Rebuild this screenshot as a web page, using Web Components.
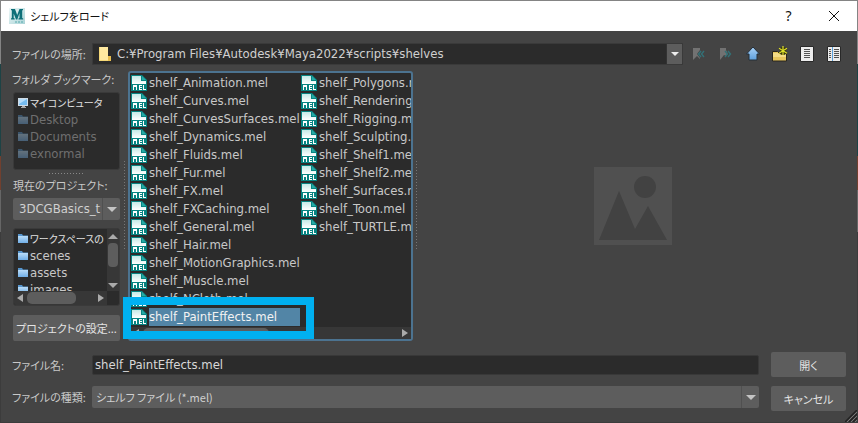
<!DOCTYPE html>
<html lang="ja">
<head>
<meta charset="utf-8">
<title>シェルフをロード</title>
<style>
  html, body { margin: 0; height: 100%; }
  body {
    font: 13px/18px "DejaVu Sans Condensed", "Noto Sans CJK JP", sans-serif;
    font-feature-settings: "palt";
    color: #c8c8c8;
    overflow: hidden;
    background: linear-gradient(#848484 0 64px, #1d4345 64px 156px, #71402f 156px 190px, #666 190px 232px, #3c3c3c 232px);
    --jp: "Noto Sans CJK JP", sans-serif;
    --panel: #444;
    --field: #2b2b2b;
    --raised: #5d5d5d;
  }
</style>
</head>
<body>
<load-dialog></load-dialog>
<script>
const define = (name, html, setup) => {
  const template = document.createElement('template');
  template.innerHTML = html;
  customElements.define(name, class extends HTMLElement {
    constructor() {
      super();
      this.attachShadow({ mode: 'open' }).append(template.content.cloneNode(true));
    }
    connectedCallback() { if (setup) setup(this, this.shadowRoot); }
  });
};

const icons = {
  maya: `<svg viewBox="0 0 16 16"><defs><linearGradient id="g" x2="1" y2="1"><stop stop-color="#eef8f8"/><stop offset="1" stop-color="#a9d3d6"/></linearGradient></defs><path fill="url(#g)" d="M0 0h16v16H0z"/><path fill="#0e6f78" d="M2 1h4l2.200 6L10.500 1H14v1l-.8.500V10l1 .5v1H9.500v-1l1-.5V5L8.300 11.500H7L4.700 5.500V10l1 .5v1H2v-1l.8-.5V2.500L2 2z"/><path stroke="#56a9ad" stroke-dasharray="2 1" d="M6 14h8"/></svg>`,
  mel: `<svg viewBox="0 0 16 16"><defs><linearGradient id="g" x2="0" y2="1"><stop stop-color="#c4e9e6"/><stop offset="1" stop-color="#fff"/></linearGradient></defs><path fill="#078482" d="M0 0h11l5 5v11H0z"/><path fill="url(#g)" d="M1 1h9v5h5v3H1z"/><path fill="#25aaa5" d="M11 1l4 4h-4z"/><path fill="#fff" d="M2 10h4v5H5v-3H3v3H2zM8 10h3v1H9v1h2v1H9v1h2v1H8zM12 10h1v4h2v1h-3z"/></svg>`,
  folder: `<svg viewBox="0 0 12 12"><defs><linearGradient id="g" x2="0" y2="1"><stop stop-color="#b9dcf8"/><stop offset="1" stop-color="#70aee6"/></linearGradient></defs><path fill="#5795cc" d="M1 1h4l1 1.500h5V10H1z"/><path fill="url(#g)" d="M1 3h10v7H1z"/></svg>`,
  computer: `<svg viewBox="0 0 12 12"><path fill="#cfdbe6" d="M1 1h10v8H1z"/><path fill="#75bbef" d="M2 2h8v6H2z"/><path fill="#b6dcf8" d="M2 2h8L2 7z"/><path fill="#aaa" d="M5 9h3v1h1v1H4v-1h1z"/></svg>`,
  location: `<svg viewBox="0 0 14 16"><path fill="#f5d878" d="M1 1h9v9h3v5H1z"/><path fill="#ffe9a0" d="M2 1h8v13H2z"/><path fill="#e7bd50" d="M10 10h3v5h-3z"/></svg>`,
  back: `<svg viewBox="0 0 16 16"><path fill="#727272" d="M2 2h7v2L6 8l3 4v1L6 10l-4 4z"/><path fill="none" stroke="#337177" stroke-width="1.400" d="M10 5L7.500 8l2.500 3M13 5l-2.500 3 2.500 3"/></svg>`,
  forward: `<svg viewBox="0 0 16 16"><path fill="#727272" d="M2 2h6v2l2 4-2 2-2-1-4 5z"/><path fill="none" stroke="#337177" stroke-width="1.400" d="M7 5l2.500 3L7 11M10 5l2.500 3L10 11"/></svg>`,
  up: `<svg viewBox="0 0 16 16"><defs><linearGradient id="g" x2="0" y2="1"><stop stop-color="#a9d2f7"/><stop offset="1" stop-color="#5d9fdc"/></linearGradient></defs><path fill="url(#g)" stroke="#252e37" d="M8 1l6.500 7H12v6H4V8H1.500z"/></svg>`,
  create: `<svg viewBox="0 0 16 16"><path fill="#e8c65c" stroke="#28251c" d="M.5 5.500h5L7 7h7.500v8H.5z"/><path fill="#f4dc86" d="M1 7h5l1 1h7v3H1z"/><path stroke="#39370d" stroke-width="3" d="M11 1v8M8 2.500l6 5M14 2.500l-6 5"/><path stroke="#dfe02a" stroke-width="1.200" d="M11 0v9M7 2.300l8 5M15 2.300l-8 5"/></svg>`,
  list: `<svg viewBox="0 0 14 16"><path fill="#ececec" stroke="#292929" d="M.5.5h13v15H.5z"/><path stroke="#525252" d="M4 3.500h6M4 5.500h6M4 7.500h6M4 9.500h6M4 11.500h6"/></svg>`,
  detail: `<svg viewBox="0 0 14 16"><path fill="#ececec" stroke="#292929" d="M.5.5h13v15H.5z"/><path stroke="#5ba0db" d="M5.500 1v14"/><path stroke="#525252" d="M2 3.500h2M2 5.500h2M2 7.500h2M2 9.500h2M2 11.500h2M7 3.500h5M7 5.500h5M7 7.500h5M7 9.500h5M7 11.500h5"/></svg>`,
  close: `<svg viewBox="0 0 12 12"><path stroke="#111" d="M1 1l10 10M11 1L1 11"/></svg>`,
  picture: `<svg viewBox="0 0 78 78"><path fill="#505050" d="M0 0h78v78H0z"/><circle cx="51" cy="20" r="11" fill="#424242"/><path fill="#424242" d="M5 73l20-49 16 38 13-23 19 34z"/></svg>`,
  grip: `<svg viewBox="0 0 12 12"><path stroke="#222" stroke-width="1.500" d="M0 12L12 0M4 12l8-8M8 12l4-4"/><path stroke="#777" d="M2 12L12 2M6 12l6-6M10 12l2-2"/></svg>`
};

define('ui-icon', `<style>
  :host { display: block; flex: none; width: 16px; height: 16px; }
  svg { display: block; width: 100%; height: 100%; }
</style>`, (el, root) => {
  root.querySelector('svg')?.remove();
  root.append(document.createRange().createContextualFragment(icons[el.getAttribute('name')]));
});

define('title-bar', `<style>
  :host { display: flex; align-items: center; height: 30px; padding: 0 16px 0 8px; background: #fff; color: #111; }
  h1 { flex: 1; margin: 0 0 0 5px; font-family: var(--jp); font-size: 11px; font-weight: 400; }
  button { display: grid; place-items: center; width: 45px; height: 30px; border: 0; padding: 0; background: none; color: inherit; font: 14px/18px "Noto Sans", sans-serif; }
  .close { width: 14px; margin-left: 16px; }
  .close ui-icon { width: 12px; height: 12px; }
</style>
<ui-icon name="maya"></ui-icon><h1><slot></slot></h1>
<button type="button">?</button><button type="button" class="close" aria-label="閉じる"><ui-icon name="close"></ui-icon></button>`);

define('push-button', `<style>
  :host { display: block; }
  button { display: block; width: 100%; height: 100%; border: 0; border-radius: 2px; padding: 0; background: var(--raised); color: #e4e4e4; font-family: var(--jp); font-size: 11px; font-feature-settings: "palt"; white-space: nowrap; }
</style>
<button type="button"><slot></slot></button>`);

define('tool-button', `<style>
  :host { display: block; }
  button { display: grid; place-items: center; width: 24px; height: 22px; border: 0; padding: 0; background: none; }
</style>
<button type="button"><slot></slot></button>`, (el, root) => {
  root.querySelector('button').setAttribute('aria-label', el.getAttribute('label'));
});

define('combo-field', `<style>
  :host { display: grid; grid-template-columns: 80px minmax(0, 1fr); align-items: center; }
  :host([stacked]) { grid-template-columns: minmax(0, 1fr); row-gap: 5px; }
  label { font-family: var(--jp); font-size: 11px; white-space: nowrap; }
  :host([stacked]) label { line-height: 16px; }
  .box { display: grid; grid-template-columns: minmax(0, 1fr) 18px; height: 22px; border-radius: 2px; background: var(--raised); }
  select { grid-area: 1 / 1 / 2 / 3; appearance: none; min-width: 0; width: 100%; height: 22px; margin: 0; border: 0; border-radius: 2px; padding: 0 18px 0 4px; background: none; color: #d0d0d0; font: inherit; font-feature-settings: "palt"; }
  :host([jp]) select { font-family: var(--jp); font-size: 11px; }
  :host([stacked]) select { padding-left: 6px; }
  .arrow { grid-area: 1 / 2; display: grid; place-items: center; border-left: 1px solid #505050; pointer-events: none; }
  .arrow::before { content: ""; border: 5px solid transparent; border-top-color: #c4c4c4; border-bottom: 0; }
  ui-icon { display: none; }
  :host([path]) .box { background: var(--field); box-shadow: inset 0 0 0 1px #3a3a3a; }
  :host([path]) .arrow { margin: 1px; background: var(--raised); border-color: #333; }
  :host([path]) .arrow::before { border-width: 4px; border-bottom: 0; border-top-color: #eee; }
  :host([path]) select { padding-left: 25px; }
  :host([path]) ui-icon { display: block; grid-area: 1 / 1; align-self: center; width: 14px; margin-left: 6px; pointer-events: none; }
</style>
<label for="s"></label><div class="box"><select id="s"><option></option></select><ui-icon name="location"></ui-icon><span class="arrow"></span></div>`, (el, root) => {
  root.querySelector('label').textContent = el.getAttribute('label');
  root.querySelector('option').textContent = el.getAttribute('value');
});

define('text-field', `<style>
  :host { display: grid; grid-template-columns: 80px minmax(0, 1fr); align-items: center; }
  label { font-family: var(--jp); font-size: 11px; white-space: nowrap; }
  input { box-sizing: border-box; min-width: 0; height: 20px; margin: 0; border: 1px solid #383838; border-radius: 2px; padding: 0 2px; background: var(--field); color: #d8d8d8; font: inherit; outline: 0; }
</style>
<label for="i"></label><input id="i" type="text">`, (el, root) => {
  root.querySelector('label').textContent = el.getAttribute('label');
  root.querySelector('input').value = el.getAttribute('value');
});

define('scroll-bar', `<style>
  :host { box-sizing: border-box; display: flex; align-items: center; background: #373737; padding: 0 3px; gap: 4px; }
  :host([vertical]) { flex-direction: column; padding: 5px 0 3px; }
  i { flex: none; border: 4px solid transparent; }
  .a { border-right: 6px solid #aaa; border-left: 0; }
  .b { border-left: 6px solid #aaa; border-right: 0; }
  :host([vertical]) .a { border: 5px solid transparent; border-bottom: 5px solid #aaa; border-top: 0; }
  :host([vertical]) .b { border: 5px solid transparent; border-top: 5px solid #aaa; border-bottom: 0; }
  .track { flex: 1; align-self: stretch; box-sizing: border-box; padding: 1px 0; }
  .thumb { width: var(--thumb); height: 100%; border-radius: 5px; background: #5d5d5d; }
  :host([vertical]) .track { min-height: 0; padding: 0 1px; }
  :host([vertical]) .thumb { width: 100%; height: var(--thumb); border-radius: 4px; }
</style>
<i class="a"></i><div class="track"><div class="thumb"></div></div><i class="b"></i>`);

define('list-box', `<style>
  :host { box-sizing: border-box; display: grid; grid-template: minmax(0, 1fr) auto / minmax(0, 1fr) auto; height: 78px; border: 1px solid #3a3a3a; border-radius: 3px; background: var(--field); overflow: hidden; }
  .items { overflow: hidden; padding: 1px 0 0 3px; }
</style>
<div class="items" role="list"><slot></slot></div><slot name="v"></slot><slot name="h"></slot>`);

define('list-item', `<style>
  :host { display: flex; align-items: center; gap: 1px; height: 17px; line-height: 17px; white-space: nowrap; }
  :host([jp]) { font-family: var(--jp); font-size: 10px; color: #e0e0e0; }
  :host([dim]) { color: #6f6f6f; }
  :host([dim]) ui-icon { opacity: .4; }
  ui-icon { width: 12px; height: 12px; }
</style>
<span><slot></slot></span>`, (el, root) => {
  el.setAttribute('role', 'listitem');
  const icon = document.createElement('ui-icon');
  icon.setAttribute('name', el.getAttribute('icon') || 'folder');
  root.querySelector('span').before(icon);
});

define('file-item', `<style>
  :host { display: flex; align-items: center; height: 18px; white-space: nowrap; }
  span { flex: 1; padding-left: 2px; box-sizing: border-box; }
  :host([selected]) span { flex: 0 0 153px; background: #5285a6; background-clip: content-box; color: #f2f2f2; }
</style>
<ui-icon name="mel"></ui-icon><span><slot></slot></span>`);

define('file-list', `<style>
  :host { position: relative; box-sizing: border-box; display: flex; flex-direction: column; min-width: 0; border: 2px solid #4c7390; border-radius: 3px; background: var(--field); }
  .items { flex: 1; min-height: 0; display: grid; grid-auto-flow: column; grid-template-rows: repeat(14, 18px); grid-auto-columns: 170px; padding: 1px 0 0 1px; overflow: hidden; }
  scroll-bar { height: 12px; --thumb: 126px; }
  .mark { position: absolute; left: -7px; bottom: 0; box-sizing: border-box; width: 191px; height: 42px; border: 8px solid #00b0f0; pointer-events: none; }
</style>
<div class="items" role="listbox"><slot></slot></div><scroll-bar></scroll-bar><div class="mark"></div>`, (el, root) => {
  const names = 'Animation Curves CurvesSurfaces Dynamics Fluids Fur FX FXCaching General Hair MotionGraphics Muscle NCloth PaintEffects Polygons Rendering Rigging Sculpting Shelf1 Shelf2 Surfaces Toon TURTLE'.split(' ');
  for (const name of names) {
    const item = document.createElement('file-item');
    item.textContent = `shelf_${name}.mel`;
    item.setAttribute('role', 'option');
    item.toggleAttribute('selected', name === 'PaintEffects');
    el.append(item);
  }
});

define('split-handle', `<style>
  :host { display: grid; place-items: center; }
  i { width: 1px; height: 90px; background: repeating-linear-gradient(#777 0 1px, transparent 1px 3px); }
  :host([horizontal]) { height: 7px; }
  :host([horizontal]) i { width: 35px; height: 1px; background: repeating-linear-gradient(90deg, #888 0 1px, transparent 1px 3px); }
</style><i></i>`);

define('side-panel', `<style>
  :host { display: flex; flex-direction: column; min-width: 0; }
  h2 { margin: 0 0 5px; font-family: var(--jp); font-size: 11px; font-weight: 400; line-height: 16px; white-space: nowrap; }
  list-box, combo-field, push-button { margin-left: 1px; }
  combo-field { margin-bottom: 8px; }
  push-button { height: 26px; margin-top: auto; }
  .v { width: 12px; --thumb: 24px; }
  .h { height: 14px; --thumb: 49px; }
</style>
<h2>フォルダ ブックマーク:</h2>
<list-box>
  <list-item jp icon="computer">マイコンピュータ</list-item>
  <list-item dim>Desktop</list-item><list-item dim>Documents</list-item><list-item dim>exnormal</list-item>
</list-box>
<split-handle horizontal></split-handle>
<combo-field stacked label="現在のプロジェクト:" value="3DCGBasics_t"></combo-field>
<list-box>
  <list-item jp>ワークスペースの</list-item><list-item>scenes</list-item><list-item>assets</list-item><list-item>images</list-item>
  <scroll-bar slot="v" class="v" vertical></scroll-bar><scroll-bar slot="h" class="h"></scroll-bar>
</list-box>
<push-button>プロジェクトの設定...</push-button>`);

define('load-dialog', `<style>
  :host { box-sizing: border-box; display: flex; flex-direction: column; height: 100vh; padding: 1px; }
  main { flex: 1; min-height: 0; display: flex; flex-direction: column; padding: 12px 11px 11px; background: var(--panel); position: relative; }
  .top { display: grid; grid-template-columns: minmax(0, 1fr) auto; margin-bottom: 6px; }
  .tools { display: flex; gap: 3px; padding-left: 4px; }
  .middle { flex: 1; min-height: 0; display: grid; grid-template-columns: 108px 8px minmax(0, 285px) 7px minmax(0, 1fr); }
  .preview { display: grid; place-items: center; }
  .preview ui-icon { width: 78px; height: 78px; }
  .bottom { display: grid; grid-template: 25px 25px / minmax(0, 1fr) 75px; gap: 9px 12px; margin-top: 11px; }
  .bottom combo-field { align-self: start; }
  .grip { position: absolute; right: 0; bottom: 0; width: 12px; height: 12px; }
</style>
<title-bar>シェルフをロード</title-bar>
<main>
  <div class="top">
    <combo-field path label="ファイルの場所:" value="C:¥Program Files¥Autodesk¥Maya2022¥scripts¥shelves"></combo-field>
    <div class="tools">
      <tool-button label="戻る"><ui-icon name="back"></ui-icon></tool-button>
      <tool-button label="進む"><ui-icon name="forward"></ui-icon></tool-button>
      <tool-button label="上へ"><ui-icon name="up"></ui-icon></tool-button>
      <tool-button label="新規フォルダ"><ui-icon name="create"></ui-icon></tool-button>
      <tool-button label="一覧"><ui-icon name="list"></ui-icon></tool-button>
      <tool-button label="詳細"><ui-icon name="detail"></ui-icon></tool-button>
    </div>
  </div>
  <div class="middle">
    <side-panel></side-panel>
    <split-handle></split-handle>
    <file-list></file-list>
    <split-handle></split-handle>
    <div class="preview"><ui-icon name="picture"></ui-icon></div>
  </div>
  <div class="bottom">
    <text-field label="ファイル名:" value="shelf_PaintEffects.mel"></text-field>
    <push-button>開く</push-button>
    <combo-field jp label="ファイルの種類:" value="シェルフ ファイル (*.mel)"></combo-field>
    <push-button>キャンセル</push-button>
  </div>
  <ui-icon class="grip" name="grip"></ui-icon>
</main>`);
</script>
</body>
</html>
